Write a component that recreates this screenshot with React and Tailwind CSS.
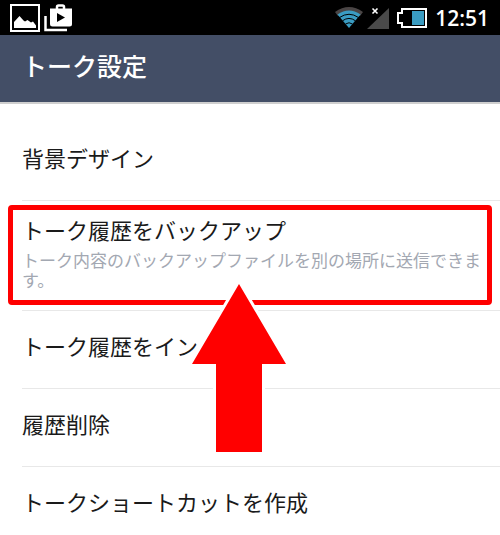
const settings = [
  { id: 'background', label: '背景デザイン' },
  {
    id: 'backup',
    label: 'トーク履歴をバックアップ',
    description: 'トーク内容のバックアップファイルを別の場所に送信できます。',
    highlighted: true,
  },
  { id: 'import', label: 'トーク履歴をイン' },
  { id: 'delete', label: '履歴削除' },
  { id: 'shortcut', label: 'トークショートカットを作成' },
];

function GalleryIcon() {
  return (
    <svg width="30" height="28" viewBox="0 0 30 28" aria-hidden="true">
      <rect x="1" y="1" width="28" height="26" fill="none" stroke="#fff" strokeWidth="2" />
      <path d="M4 24v-6l5.500-6 4 4.500 1.500 1 2.500-1.500 3.500 2.500 2-1 3 4v2.500z" fill="#fff" />
    </svg>
  );
}

function PlayStoreIcon() {
  return (
    <svg width="28" height="28" viewBox="0 0 28 28" aria-hidden="true">
      <path d="M1.500 12v14H23" fill="none" stroke="#fff" strokeWidth="2.500" />
      <path d="M13 5V3q0-1.500 1.500-1.500h4Q20 1.500 20 3v2" fill="none" stroke="#fff" strokeWidth="2.500" />
      <path d="M6 4.500h22V20q0 2.500-2.500 2.500h-17Q6 22.500 6 20z" fill="#fff" />
      <path d="M13 9l8 4.500-8 4.500z" fill="#000" />
    </svg>
  );
}

function WifiIcon() {
  return (
    <svg width="28" height="22" viewBox="0 0 28 22" aria-hidden="true">
      <path d="M0 5Q14-5 28 5l-3 4Q14 1 3 9z" fill="#4a4545" />
      <path d="M14 21L2.500 7.500Q14-.5 25.500 7.500z" fill="#3a9cc2" />
      <path d="M4.500 10.500Q14 4 23.500 10.500M7.500 13.800Q14 9 20.500 13.800M10.500 17Q14 14.500 17.500 17" fill="none" stroke="#000" strokeWidth="1" />
    </svg>
  );
}

function SignalIcon() {
  return (
    <svg width="22" height="22" viewBox="0 0 22 22" aria-hidden="true">
      <path d="M22 1v21H0z" fill="#4a4a4a" />
      <path d="M5.500 1.500l5 5M10.500 1.500l-5 5" stroke="#fff" strokeWidth="1.600" />
    </svg>
  );
}

function BatteryIcon() {
  return (
    <svg width="30" height="20" viewBox="0 0 30 20" aria-hidden="true">
      <path d="M5 1h24v18H5v-4H1V5h4z" fill="none" stroke="#fff" strokeWidth="2" />
      <rect x="15" y="3" width="12" height="14" fill="#3a9cc2" />
    </svg>
  );
}

function StatusBar() {
  return (
    <div className="flex h-[35px] items-center justify-between bg-black pr-[11px] pl-[10px] text-white">
      <div className="flex items-center gap-1">
        <GalleryIcon />
        <PlayStoreIcon />
      </div>
      <div className="flex items-center">
        <div className="flex items-center gap-1">
          <WifiIcon />
          <SignalIcon />
        </div>
        <div className="ml-2 flex items-center gap-2">
          <BatteryIcon />
          <time className="font-['Open_Sans',sans-serif] text-[21px] leading-8 font-semibold">12:51</time>
        </div>
      </div>
    </div>
  );
}

function Highlight() {
  return (
    <span className="pointer-events-none absolute inset-x-2 top-1 bottom-[6px] rounded-sm border-5 border-[#ff0000]" />
  );
}

function Arrow() {
  return (
    <svg
      className="pointer-events-none absolute top-[76px] left-[47.8%] z-10 -translate-x-1/2"
      width="106"
      height="180"
      viewBox="0 0 106 180"
      aria-hidden="true"
    >
      <path
        d="M53 7L100 87H76V175H30V87H6z"
        fill="#ff0000"
        stroke="#fff"
        strokeWidth="6"
        paintOrder="stroke"
      />
    </svg>
  );
}

function SettingRow({ item }) {
  return (
    <li className="relative">
      <button type="button" className="block w-full pl-[22px] text-left">
        <span className={`block border-b border-[#e8e8e8] pr-4 ${item.highlighted ? 'pt-3 pb-5' : 'pt-[18px] pb-[26px]'}`}>
          <span className="block text-[22px] leading-[33px] text-[#1a1a1a]">{item.label}</span>
          {item.description && (
            <span className="mt-1 block text-[17px] leading-5 text-[#a3a8b2]">{item.description}</span>
          )}
        </span>
      </button>
      {item.highlighted && <Highlight />}
      {item.highlighted && <Arrow />}
    </li>
  );
}

function App() {
  return (
    <div className="overflow-hidden bg-white font-['Noto_Sans_CJK_JP',sans-serif]" lang="ja">
      <StatusBar />
      <header className="border-b-2 border-[#cfcfcf] bg-[#434e66] px-[22px] pt-3 pb-[19px]">
        <h1 className="text-[25px] leading-9 font-medium text-white">トーク設定</h1>
      </header>
      <ul className="pt-[19px]">
        {settings.map((item) => (
          <SettingRow key={item.id} item={item} />
        ))}
      </ul>
    </div>
  );
}

export default App;
